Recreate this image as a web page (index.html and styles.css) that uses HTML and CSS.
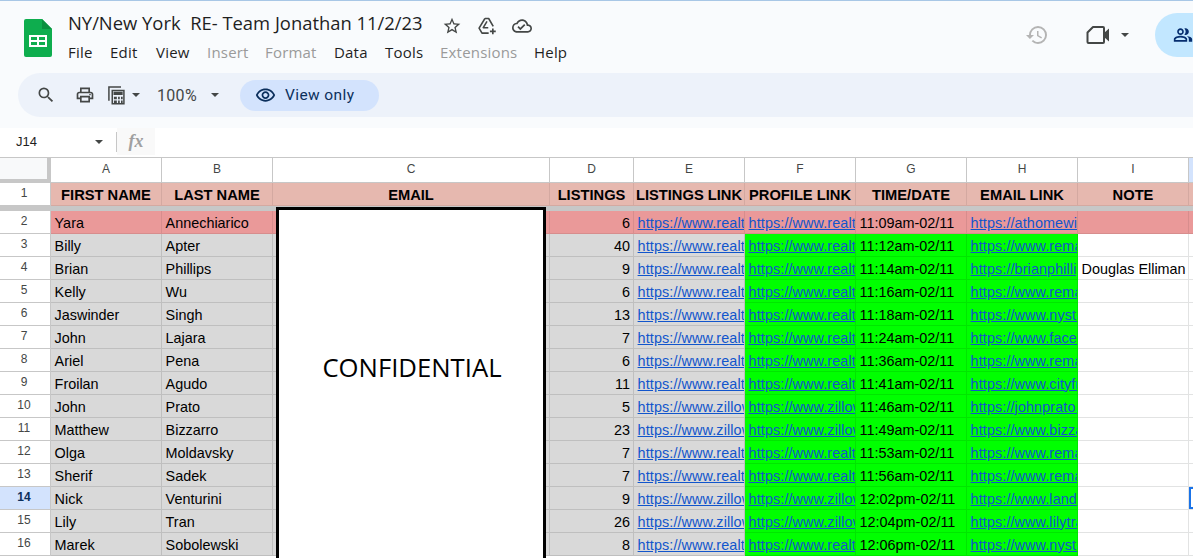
FILE: index.html
```html
<!DOCTYPE html>
<html lang="en">
<head>
<meta charset="utf-8">
<title>NY/New York RE- Team Jonathan 11/2/23</title>
<link rel="stylesheet" href="styles.css">
</head>
<body>
<header class="top">
  <svg class="logo" viewBox="0 0 28 38"><path fill="#0ead4e" d="M2 0h16l10 10v26a2 2 0 0 1-2 2H2a2 2 0 0 1-2-2V2a2 2 0 0 1 2-2z"/><path fill="#0a8f3f" d="M18 0l10 10h-10z"/><path fill="#fff" fill-rule="evenodd" d="M5 16h18v12H5zm2 2v3h6v-3zm8 0v3h6v-3zM7 23v3h6v-3zm8 0v3h6v-3z"/></svg>
  <div class="docinfo">
    <div class="titlerow">
      <span class="title">NY/New York  RE- Team Jonathan 11/2/23</span>
      <svg class="ic20 star" viewBox="0 0 24 24"><path d="M22 9.240l-7.190-.62L12 2 9.190 8.630 2 9.240l5.460 4.730L5.820 21 12 17.270 18.180 21l-1.630-7.030L22 9.240zM12 15.400l-3.760 2.270 1-4.280-3.320-2.880 4.380-.38L12 6.100l1.710 4.040 4.380.38-3.320 2.880 1 4.280L12 15.400z"/></svg>
      <svg class="ic20 drive" viewBox="0 0 24 24"><path fill="none" stroke="#444746" stroke-width="1.900" stroke-linejoin="round" d="M9.500 3h4.500l5.500 9.500M9.500 3L2.500 14.500 6 20.500h8M9.500 3m2.500 3.500l-4.500 7.500h6"/><path fill="none" stroke="#444746" stroke-width="2" d="M19 15v7M15.500 18.500h7"/></svg>
      <svg class="ic20 cloud" viewBox="0 0 24 24"><path d="M19.350 10.040C18.670 6.590 15.640 4 12 4 9.110 4 6.600 5.640 5.350 8.040 2.340 8.360 0 10.910 0 14c0 3.310 2.690 6 6 6h13c2.760 0 5-2.240 5-5 0-2.640-2.050-4.780-4.650-4.960zM19 18H6c-2.210 0-4-1.790-4-4 0-2.050 1.530-3.760 3.560-3.970l1.070-.11.500-.95C8.080 7.140 9.940 6 12 6c2.620 0 4.880 1.860 5.390 4.430l.3 1.500 1.530.11c1.560.1 2.780 1.410 2.780 2.960 0 1.650-1.350 3-3 3zm-9-3.820l-2.090-2.090L6.500 13.500 10 17l6.010-6.010-1.410-1.410z"/></svg>
    </div>
    <nav class="menu">
      <span class="m-file">File</span><span class="m-edit">Edit</span><span class="m-view">View</span><span class="off m-insert">Insert</span><span class="off m-format">Format</span><span class="m-data">Data</span><span class="m-tools">Tools</span><span class="off m-ext">Extensions</span><span>Help</span>
    </nav>
  </div>
  <div class="actions">
    <svg class="ic24 history" viewBox="0 0 24 24"><path d="M13 3a9 9 0 0 0-9 9H1l3.890 3.890.07.14L9 12H6c0-3.870 3.130-7 7-7s7 3.130 7 7-3.130 7-7 7c-1.930 0-3.680-.79-4.940-2.060l-1.420 1.420A8.954 8.954 0 0 0 13 21a9 9 0 0 0 0-18zm-1 5v5l4.250 2.520.77-1.280-3.520-2.090V8z"/></svg>
    <svg class="ic24 video" viewBox="0 0 24 24"><path fill="none" stroke="#444746" stroke-width="2" stroke-linejoin="round" d="M7 4h10a1 1 0 0 1 1 1v14a1 1 0 0 1-1 1H2.500a1 1 0 0 1-1-1V9.500z"/><path fill="#444746" d="M18 10l5-4.500v13L18 14z"/></svg>
    <span class="caret caret-video"></span>
    <div class="share">
      <svg class="ic20" viewBox="0 0 24 24"><path fill="#062e6f" d="M16.670 13.130C18.040 14.060 19 15.320 19 17v3h4v-3c0-2.180-3.570-3.470-6.330-3.870zM15 12c2.210 0 4-1.790 4-4s-1.790-4-4-4c-.47 0-.91.1-1.330.24a5.980 5.980 0 0 1 0 7.520c.42.14.86.24 1.330.24zM9 12c2.210 0 4-1.790 4-4s-1.790-4-4-4-4 1.790-4 4 1.790 4 4 4zm0-6c1.100 0 2 .9 2 2s-.9 2-2 2-2-.9-2-2 .9-2 2-2zM9 13c-2.670 0-8 1.340-8 4v3h16v-3c0-2.660-5.330-4-8-4zm6 5H3v-.99C3.200 16.290 6.300 15 9 15s5.800 1.290 6 2v1z"/></svg>
    </div>
  </div>
</header>

<div class="toolbar">
  <svg class="ic20 t-search" viewBox="0 0 24 24"><path d="M15.500 14h-.79l-.28-.27A6.471 6.471 0 0 0 16 9.500 6.500 6.500 0 1 0 9.500 16c1.610 0 3.090-.59 4.230-1.570l.27.28v.79l5 4.990L20.490 19l-4.990-5zm-6 0C7.010 14 5 11.990 5 9.500S7.010 5 9.500 5 14 7.010 14 9.500 11.990 14 9.500 14z"/></svg>
  <svg class="ic20 t-print" viewBox="0 0 24 24"><path d="M19 8h-1V3H6v5H5c-1.660 0-3 1.340-3 3v6h4v4h12v-4h4v-6c0-1.660-1.340-3-3-3zM8 5h8v3H8V5zm8 12v2H8v-4h8v2zm2-2v-2H6v2H4v-4c0-.55.45-1 1-1h14c.55 0 1 .45 1 1v4h-2z"/><circle cx="18" cy="11.500" r="1"/></svg>
  <svg class="ic20 t-calc" viewBox="0 0 24 24"><path fill="none" stroke="#444746" stroke-width="1.800" d="M7.500 6.500h14v16h-14zM18 2.500H3.500V19"/><path d="M9 8h11v4H9zM9.500 14H13v3H9.500zM14.500 14H16.500v3h-2zM18 14h2v3h-2zM9.500 18.500H13v3H9.500zM14.500 18.500h2v3h-2zM18 18.500h2v3h-2z"/></svg>
  <span class="caret t-caret1"></span>
  <span class="zoomval">100%</span>
  <span class="caret t-caret2"></span>
  <div class="viewonly">
    <svg class="ic20 eye" viewBox="0 0 24 24"><path d="M12 6c3.790 0 7.170 2.130 8.820 5.500C19.170 14.870 15.790 17 12 17s-7.170-2.130-8.820-5.500C4.830 8.130 8.210 6 12 6m0-2C7 4 2.730 7.110 1 11.500 2.730 15.890 7 19 12 19s9.270-3.110 11-7.500C21.270 7.110 17 4 12 4zm0 5c1.380 0 2.500 1.120 2.500 2.500S13.380 14 12 14s-2.500-1.120-2.500-2.500S10.620 9 12 9m0-2c-2.480 0-4.500 2.020-4.500 4.500S9.520 16 12 16s4.500-2.020 4.500-4.500S14.480 7 12 7z"/></svg>
    <span>View only</span>
  </div>
</div>

<div class="formula">
  <span class="namebox">J14</span>
  <span class="caret f-caret"></span>
  <span class="fsep"></span>
  <span class="fx">fx</span>
</div>

<main class="sheet">
  <table class="grid">
    <colgroup><col class="c-h"><col class="c-n"><col class="c-n"><col class="c-c"><col class="c-d"><col class="c-n"><col class="c-n"><col class="c-n"><col class="c-n"><col class="c-n"><col class="c-j"></colgroup>
    <tr class="letters"><th class="corner"></th><th>A</th><th>B</th><th>C</th><th>D</th><th>E</th><th>F</th><th>G</th><th>H</th><th>I</th><th class="jh"></th></tr>
    <tr class="heads"><th class="rh">1</th><td>FIRST NAME</td><td>LAST NAME</td><td>EMAIL</td><td>LISTINGS</td><td>LISTINGS LINK</td><td>PROFILE LINK</td><td>TIME/DATE</td><td>EMAIL LINK</td><td>NOTE</td><td></td></tr>
    <tr class="freeze"><td colspan="11"></td></tr>
    <tr class="red"><th class="rh">2</th><td>Yara</td><td>Annechiarico</td><td></td><td class="num">6</td><td><a>https://www.realtor.com/</a></td><td><a>https://www.realtor.com/</a></td><td>11:09am-02/11</td><td><a>https://athomewithyara.com</a></td><td></td><td></td></tr>
    <tr><th class="rh">3</th><td class="g">Billy</td><td class="g">Apter</td><td class="g"></td><td class="g num">40</td><td class="g"><a>https://www.realtor.com/</a></td><td class="v"><a>https://www.realtor.com/</a></td><td class="v">11:12am-02/11</td><td class="v"><a>https://www.remax.com/</a></td><td></td><td></td></tr>
    <tr><th class="rh">4</th><td class="g">Brian</td><td class="g">Phillips</td><td class="g"></td><td class="g num">9</td><td class="g"><a>https://www.realtor.com/</a></td><td class="v"><a>https://www.realtor.com/</a></td><td class="v">11:14am-02/11</td><td class="v"><a>https://brianphillips.com</a></td><td class="spill">Douglas Elliman</td><td></td></tr>
    <tr><th class="rh">5</th><td class="g">Kelly</td><td class="g">Wu</td><td class="g"></td><td class="g num">6</td><td class="g"><a>https://www.realtor.com/</a></td><td class="v"><a>https://www.realtor.com/</a></td><td class="v">11:16am-02/11</td><td class="v"><a>https://www.remax.com/</a></td><td></td><td></td></tr>
    <tr><th class="rh">6</th><td class="g">Jaswinder</td><td class="g">Singh</td><td class="g"></td><td class="g num">13</td><td class="g"><a>https://www.realtor.com/</a></td><td class="v"><a>https://www.realtor.com/</a></td><td class="v">11:18am-02/11</td><td class="v"><a>https://www.nystate.com/</a></td><td></td><td></td></tr>
    <tr><th class="rh">7</th><td class="g">John</td><td class="g">Lajara</td><td class="g"></td><td class="g num">7</td><td class="g"><a>https://www.realtor.com/</a></td><td class="v"><a>https://www.realtor.com/</a></td><td class="v">11:24am-02/11</td><td class="v"><a>https://www.facebook.com/</a></td><td></td><td></td></tr>
    <tr><th class="rh">8</th><td class="g">Ariel</td><td class="g">Pena</td><td class="g"></td><td class="g num">6</td><td class="g"><a>https://www.realtor.com/</a></td><td class="v"><a>https://www.realtor.com/</a></td><td class="v">11:36am-02/11</td><td class="v"><a>https://www.remax.com/</a></td><td></td><td></td></tr>
    <tr><th class="rh">9</th><td class="g">Froilan</td><td class="g">Agudo</td><td class="g"></td><td class="g num">11</td><td class="g"><a>https://www.realtor.com/</a></td><td class="v"><a>https://www.realtor.com/</a></td><td class="v">11:41am-02/11</td><td class="v"><a>https://www.cityfront.com/</a></td><td></td><td></td></tr>
    <tr><th class="rh">10</th><td class="g">John</td><td class="g">Prato</td><td class="g"></td><td class="g num">5</td><td class="g"><a>https://www.zillow.com/</a></td><td class="v"><a>https://www.zillow.com/</a></td><td class="v">11:46am-02/11</td><td class="v"><a>https://johnprato.com/</a></td><td></td><td></td></tr>
    <tr><th class="rh">11</th><td class="g">Matthew</td><td class="g">Bizzarro</td><td class="g"></td><td class="g num">23</td><td class="g"><a>https://www.zillow.com/</a></td><td class="v"><a>https://www.zillow.com/</a></td><td class="v">11:49am-02/11</td><td class="v"><a>https://www.bizzarro.com/</a></td><td></td><td></td></tr>
    <tr><th class="rh">12</th><td class="g">Olga</td><td class="g">Moldavsky</td><td class="g"></td><td class="g num">7</td><td class="g"><a>https://www.realtor.com/</a></td><td class="v"><a>https://www.realtor.com/</a></td><td class="v">11:53am-02/11</td><td class="v"><a>https://www.remax.com/</a></td><td></td><td></td></tr>
    <tr><th class="rh">13</th><td class="g">Sherif</td><td class="g">Sadek</td><td class="g"></td><td class="g num">7</td><td class="g"><a>https://www.realtor.com/</a></td><td class="v"><a>https://www.realtor.com/</a></td><td class="v">11:56am-02/11</td><td class="v"><a>https://www.remax.com/</a></td><td></td><td></td></tr>
    <tr><th class="rh cur">14</th><td class="g">Nick</td><td class="g">Venturini</td><td class="g"></td><td class="g num">9</td><td class="g"><a>https://www.zillow.com/</a></td><td class="v"><a>https://www.zillow.com/</a></td><td class="v">12:02pm-02/11</td><td class="v"><a>https://www.landmark.com/</a></td><td></td><td class="sel"></td></tr>
    <tr><th class="rh">15</th><td class="g">Lily</td><td class="g">Tran</td><td class="g"></td><td class="g num">26</td><td class="g"><a>https://www.zillow.com/</a></td><td class="v"><a>https://www.zillow.com/</a></td><td class="v">12:04pm-02/11</td><td class="v"><a>https://www.lilytran.com/</a></td><td></td><td></td></tr>
    <tr><th class="rh">16</th><td class="g">Marek</td><td class="g">Sobolewski</td><td class="g"></td><td class="g num">8</td><td class="g"><a>https://www.realtor.com/</a></td><td class="v"><a>https://www.realtor.com/</a></td><td class="v">12:06pm-02/11</td><td class="v"><a>https://www.nystate.com/</a></td><td></td><td></td></tr>
  </table>
  <div class="confidential"><span>CONFIDENTIAL</span></div>
</main>
</body>
</html>
```

FILE: styles.css
```css
* { box-sizing: border-box; }
html, body { margin: 0; height: 558px; overflow: hidden; }
body { background: #f9fbfd; font-family: Roboto, "Liberation Sans", sans-serif; color: #1f1f1f; border-top: 1px solid #a8c7e6; }
svg { display: block; flex: none; fill: #444746; }
.ic20 { width: 20px; height: 20px; }
.ic24 { width: 24px; height: 24px; }
.caret { display: block; flex: none; width: 0; height: 0; border-left: 4px solid transparent; border-right: 4px solid transparent; border-top: 4px solid #444746; }

.top { height: 72px; display: flex; align-items: flex-start; }
.logo { width: 28px; height: 38px; margin: 18px 0 0 24px; }
.docinfo { margin: 7px 0 0 16px; }
.titlerow { display: flex; align-items: center; height: 28px; }
.title { font-family: "Open Sans", sans-serif; font-size: 18.400px; white-space: pre; color: #1f1f1f; letter-spacing: 0; width: 374px; }
.star { margin-top: 7px; }
.drive { margin-left: 15px; margin-top: 7px; }
.cloud { margin-left: 15px; margin-top: 7px; }
.menu { display: flex; font-family: "Open Sans", sans-serif; font-size: 15px; letter-spacing: .2px; margin-top: 6px; line-height: 20px; }
.menu .off { color: #9a9a9a; }
.m-file { width: 42px; } .m-edit { width: 46px; } .m-view { width: 51px; } .m-insert { width: 58px; } .m-format { width: 69px; } .m-data { width: 51px; } .m-tools { width: 55px; } .m-ext { width: 94px; }

.actions { margin-left: auto; display: flex; align-items: center; height: 44px; margin-top: 12px; }
.history { fill: #b4b4b4; }
.video { margin-left: 37px; }
.caret-video { margin-left: 11px; }
.share { margin-left: 26px; width: 38px; height: 44px; background: #c2e7ff; border-radius: 22px 0 0 22px; display: flex; align-items: center; padding-left: 18px; }

.toolbar { height: 44px; margin-left: 18px; background: #edf2fa; border-radius: 22px 0 0 22px; display: flex; align-items: center; }
.t-search { margin-left: 18px; }
.t-print { margin-left: 19px; }
.t-calc { margin-left: 11px; }
.t-caret1 { margin-left: 6px; }
.zoomval { font-size: 16px; letter-spacing: .3px; color: #444746; margin-left: 17px; width: 54px; }
.t-caret2 { margin-left: 0; }
.viewonly { margin-left: 21px; width: 139px; height: 31px; border-radius: 16px; background: #d3e3fd; display: flex; align-items: center; color: #0b2f5c; font-size: 15.500px; letter-spacing: .4px; padding-left: 15px; gap: 9px; }
.eye { fill: #0b2f5c; width: 21px; height: 21px; }

.formula { height: 30px; margin-top: 11px; background: #fff; display: flex; align-items: center; border-bottom: 1px solid #c7c7c7; padding-bottom: 2px; }
.namebox { font: 13px "Liberation Sans", sans-serif; color: #1f1f1f; margin-left: 16px; width: 79px; }
.f-caret { margin-right: 13px; }
.fsep { width: 1px; height: 20px; background: #c7c7c7; flex: none; }
.fx { width: 38px; align-self: stretch; background: #f9f9f9; font: italic bold 18px "Liberation Serif", serif; color: #a0a0a0; display: flex; align-items: center; justify-content: center; }

.sheet { position: relative; height: 400px; overflow: hidden; background: #fff; }
.grid { table-layout: fixed; width: 1193px; border-collapse: separate; border-spacing: 0; font: 14.400px "Liberation Sans", sans-serif; color: #000; }
.c-h { width: 51px; } .c-n { width: 111px; } .c-c { width: 277px; } .c-d { width: 84px; } .c-j { width: 4px; }
.grid td, .grid th { padding: 0; overflow: hidden; white-space: nowrap; }
.grid td { height: 23px; padding: 1px 3px 0 3.600px; border-right: 1px solid #e2e3e3; border-bottom: 1px solid #e2e3e3; vertical-align: middle; }
.grid td:last-child { border-right: 0; padding: 0; }
.grid a { color: #1155cc; text-decoration: underline; letter-spacing: .1px; }

.letters th { height: 25px; background: #fff; font: 12px "Liberation Sans", sans-serif; color: #444746; border-right: 1px solid #c7c7c7; border-bottom: 1px solid #c7c7c7; padding-bottom: 2px; }
.letters .corner { background: #f8f9fa; border-right: 4px solid #c7c7c7; border-bottom: 4px solid #c7c7c7; }
.letters .jh { background: #d3e3fd; border-right: 0; }
.rh { background: #fff; font: 12px "Liberation Sans", sans-serif; color: #444746; border-right: 1px solid #c7c7c7; border-bottom: 1px solid #c7c7c7; padding-right: 2px !important; padding-bottom: 3px !important; }
.rh.cur { background: #d3e3fd; font-weight: bold; color: #0b2f5c; }

.heads td { background: #e6b8af; border-color: rgba(0,0,0,.08); font-size: 14.700px; font-weight: bold; text-align: center; padding: 2px 1px 0; }
.freeze td { height: 5px; padding: 0; background: #c7c7c7; border: 0; }
.red td { background: #ea9999; border-color: rgba(0,0,0,.08); }
.g { background: #d9d9d9; border-color: #bfbfbf !important; }
.v { background: #00ff00; border-color: #00e600 !important; }
.num { text-align: right; padding-right: 3px; }
.spill { overflow: visible !important; }
.grid .sel { box-shadow: inset 2px 2px 0 #1a73e8, inset 0 -2px 0 #1a73e8; }

.confidential { position: absolute; left: 276px; top: 49px; width: 270px; height: 400px; background: #fff; border: 3px solid #000; display: flex; justify-content: center; padding: 140px 0 0 2px; font: 25.700px "Open Sans", sans-serif; color: #000; }
```
